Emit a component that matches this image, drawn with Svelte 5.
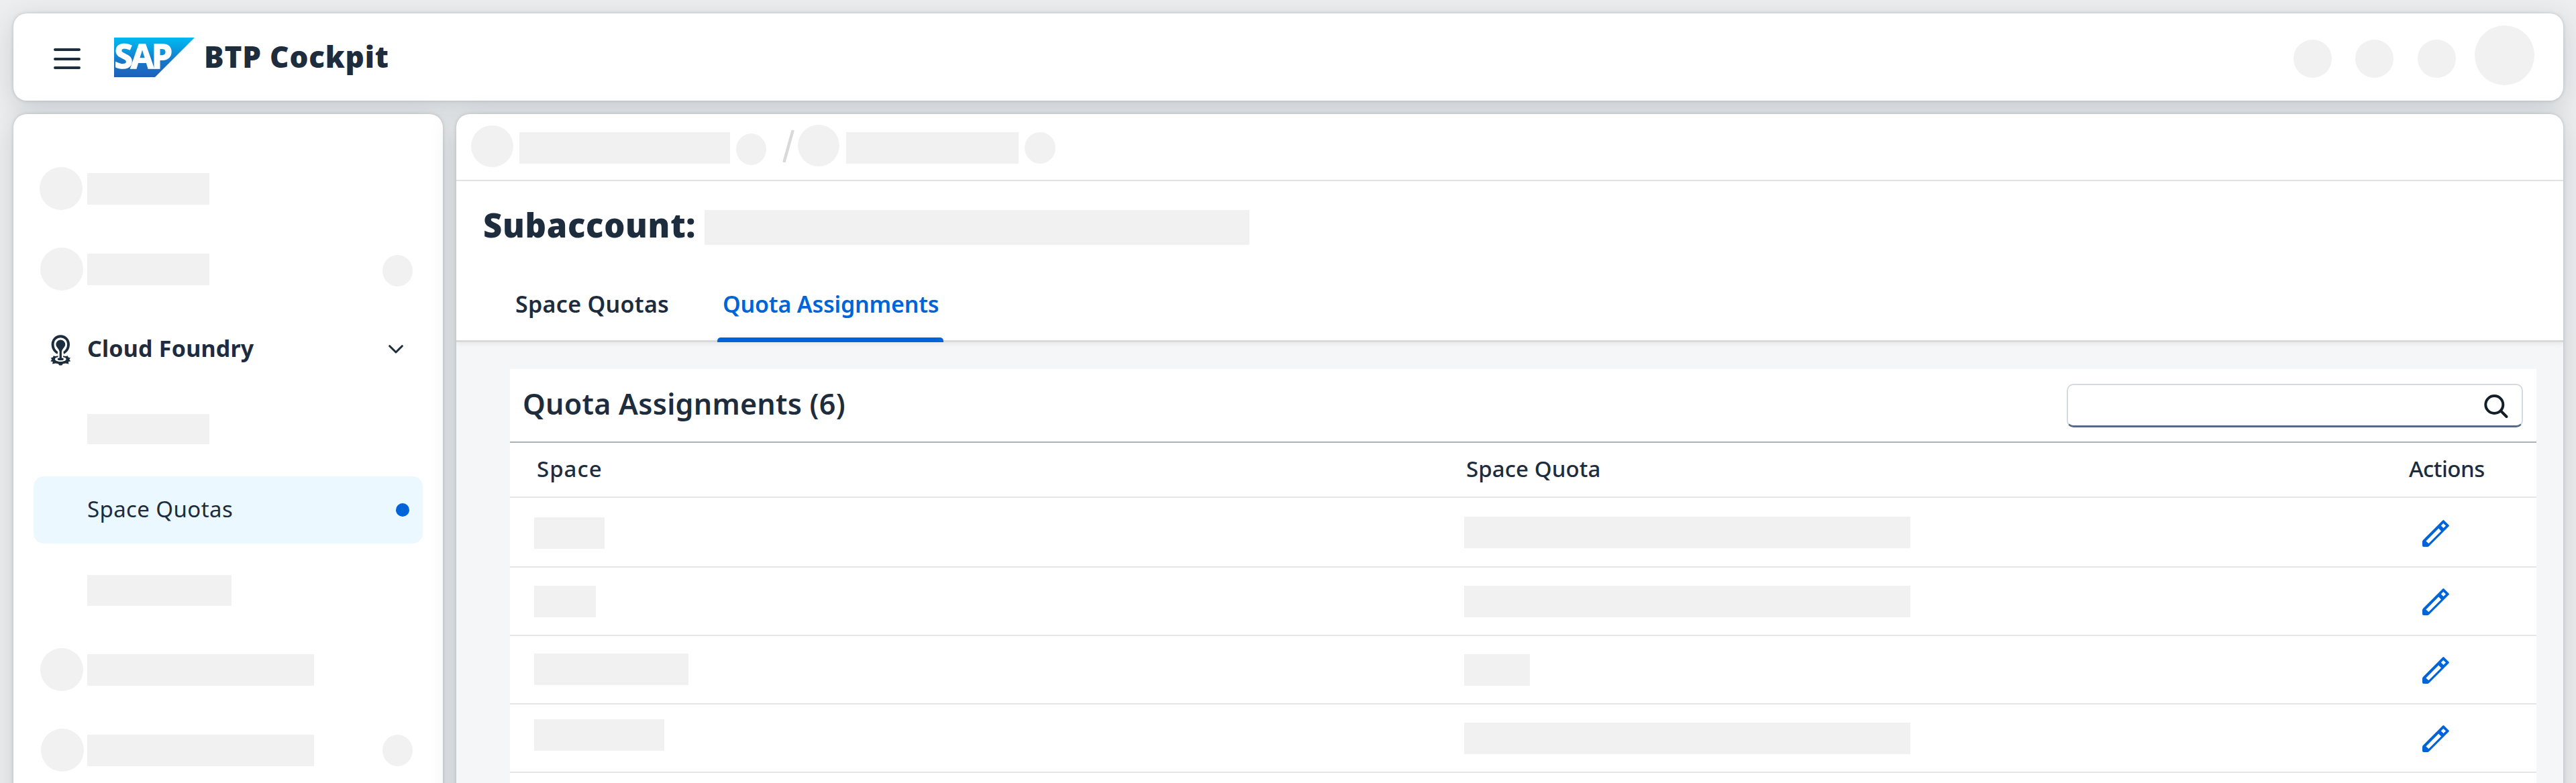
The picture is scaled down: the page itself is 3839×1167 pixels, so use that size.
<script>
  // Placeholder sidebar rows: dot / bar / badge sizes and their offset inside the row
  const nav = [
    { dot: { left: 9, top: 19 }, bar: { w: 182, h: 47, top: 28 } },
    { dot: { left: 10, top: 19 }, bar: { w: 182, h: 47, top: 28 }, badge: 30 },
    { kind: 'group', label: 'Cloud Foundry' },
    { bar: { w: 182, h: 45, top: 27 } },
    { kind: 'selected', label: 'Space Quotas' },
    { bar: { w: 215, h: 46, top: 27 } },
    { dot: { left: 10, top: 16 }, bar: { w: 338, h: 47, top: 25 } },
    { dot: { left: 11, top: 16 }, bar: { w: 338, h: 47, top: 25 }, badge: 25 }
  ];

  const rows = [
    { space: 105, spaceTop: 29, quota: 665, quotaTop: 28 },
    { space: 92, spaceTop: 27, quota: 665, quotaTop: 27 },
    { space: 230, spaceTop: 26, quota: 98, quotaTop: 27 },
    { space: 194, spaceTop: 22, quota: 665, quotaTop: 27 }
  ];
</script>

<div class="shell">
  <header class="topbar">
    <svg class="burger" viewBox="0 0 40 32" fill="none" stroke="#1d2d3e" stroke-width="4" stroke-linecap="round">
      <path d="M2 2H38M2 16H38M2 29H38" />
    </svg>
    <svg class="logo" viewBox="0 0 120 59">
      <defs>
        <linearGradient id="sap" x1="0" y1="0" x2="0" y2="1">
          <stop offset="0" stop-color="#00b8f1" />
          <stop offset=".22" stop-color="#06a5e5" />
          <stop offset=".55" stop-color="#157bcb" />
          <stop offset="1" stop-color="#1f5fbb" />
        </linearGradient>
      </defs>
      <path d="M0 0H120L61 59H0Z" fill="url(#sap)" />
      <text x=".6" y="46.3">SAP</text>
    </svg>
    <span class="product">BTP Cockpit</span>
    <div class="tools">
      <i class="ph round tool"></i>
      <i class="ph round tool"></i>
      <i class="ph round tool"></i>
      <i class="ph round avatar"></i>
    </div>
  </header>

  <div class="body">
    <nav class="side">
      {#each nav as item}
        <div class="item {item.kind ?? ''}">
          <div class="lead">
            {#if item.dot}
              <i class="ph round dot" style:margin-left="{item.dot.left}px" style:margin-top="{item.dot.top}px"></i>
            {:else if item.kind === 'group'}
              <svg class="cf" viewBox="15 8 31 47" fill="#1d2d3e">
                <path d="M25.6 37.8C20 35.2 16.6 30 16.6 23A13.7 13.7 0 0 1 44 23C44 30 40.6 35.2 35 37.8L34.4 34.2C38.2 31.8 40.1 27.9 40.1 23A9.8 9.8 0 0 0 20.5 23C20.5 27.9 22.4 31.8 26.2 34.2Z" />
                <path d="M30.3 16.6A6.9 6.9 0 0 1 37.2 23.5C37.2 27.5 32.4 29.5 31.9 34.5L32 44.5H28.6L28.7 34.5C28.2 29.5 23.4 27.5 23.4 23.5A6.9 6.9 0 0 1 30.3 16.6Z" />
                <path fill-rule="evenodd" d="M26.5 40.2L22.6 40.9L19.8 40.3L18.8 42.4L15.6 43.6L17.3 45.6L15.4 48.6L18.6 49L18.2 52.6L22.8 51.6L26.8 52.3L28.4 54.6H32.2L33.8 52.3L37.8 51.6L42.4 52.6L42 49L45.2 48.6L43.3 45.6L45 43.6L41.8 42.4L40.8 40.3L38 40.9L34.1 40.2V42.2C37 42.6 38.6 43.8 38.6 45.2C38.6 47.4 34.8 48.9 30.3 48.9S22 47.4 22 45.2C22 43.8 23.6 42.6 26.5 42.2Z" />
                <ellipse cx="30.3" cy="45.2" rx="4.6" ry="1.9" />
              </svg>
            {/if}
          </div>
          {#if item.label}
            <span class="label">{item.label}</span>
          {:else}
            <i class="ph" style:width="{item.bar.w}px" style:height="{item.bar.h}px" style:margin-top="{item.bar.top}px"></i>
          {/if}
          {#if item.badge}
            <i class="ph round badge" style:margin-top="{item.badge}px"></i>
          {:else if item.kind === 'group'}
            <svg class="chev" viewBox="0 0 22 13" fill="none" stroke="#1d2d3e" stroke-width="3" stroke-linecap="round" stroke-linejoin="round">
              <path d="M1.7 1.7L11 11L20.3 1.7" />
            </svg>
          {:else if item.kind === 'selected'}
            <i class="marker"></i>
          {/if}
        </div>
      {/each}
    </nav>

    <main class="main">
      <div class="crumbs">
        <i class="ph round c1"></i>
        <i class="ph b1"></i>
        <i class="ph round c2"></i>
        <svg class="slash" viewBox="0 0 18 48" stroke="#d9d9d9" stroke-width="4.4"><path d="M2.3 48L15.7 0" /></svg>
        <i class="ph round c3"></i>
        <i class="ph b2"></i>
        <i class="ph round c4"></i>
      </div>

      <section class="head">
        <div class="title">
          <h1>Subaccount:</h1>
          <i class="ph name"></i>
        </div>
        <div class="tabs">
          <span class="tab">Space Quotas</span>
          <span class="tab active">Quota Assignments</span>
        </div>
      </section>

      <section class="content">
        <div class="card">
          <div class="toolbar">
            <h2>Quota Assignments (6)</h2>
            <div class="search">
              <svg viewBox="0 0 38 38" fill="none" stroke="#131e29" stroke-width="4" stroke-linecap="round">
                <circle cx="16.3" cy="16" r="13" />
                <path d="M26 25.5L34.5 34" />
              </svg>
            </div>
          </div>
          <div class="row thead">
            <span class="th space">Space</span>
            <span class="th quota">Space Quota</span>
            <span class="th actions">Actions</span>
          </div>
          {#each rows as row}
            <div class="row">
              <i class="ph cell" style:width="{row.space}px" style:margin-top="{row.spaceTop}px"></i>
              <i class="ph cell" style:width="{row.quota}px" style:margin-top="{row.quotaTop}px"></i>
              <svg class="pencil" viewBox="0 0 40 40">
                <path fill="#0064d9" fill-rule="evenodd" d="M30.4 .6Q31.4 -.4 32.4 .6L39.4 7.6Q40.4 8.6 39.4 9.6L10.2 38.8Q9 40 7.4 40H2Q0 40 0 38V32.6Q0 31 1.2 29.8ZM24.2 12.6L5.4 31.4L9.4 34.9L28 16.4ZM31.2 5L27.8 8.4L31.5 12L35 8.6Z" />
              </svg>
            </div>
          {/each}
        </div>
      </section>
    </main>
  </div>
</div>

<style>
  :global(body) { margin: 0; overflow: hidden; }
  .shell {
    box-sizing: border-box;
    width: 3839px;
    height: 1167px;
    padding: 20px 19px 0 20px;
    overflow: hidden;
    display: flex;
    flex-direction: column;
    gap: 20px;
    background: #edeeef;
    color: #1d2d3e;
    font-family: "Noto Sans", "Open Sans", sans-serif;
  }
  .topbar, .side, .main {
    box-sizing: border-box;
    background: #fff;
    box-shadow: 0 0 5px rgba(34, 53, 72, .2), 0 10px 40px rgba(34, 53, 72, .18);
  }
  .ph { display: block; flex: none; background: #f1f1f1; }
  .round { border-radius: 50%; }

  .topbar {
    flex: none;
    height: 130px;
    border-radius: 20px;
    display: flex;
    align-items: center;
    padding: 0 43px 0 60px;
  }
  .burger { width: 40px; height: 32px; margin-top: 5px; }
  .logo { width: 120px; height: 59px; margin-left: 50px; overflow: visible; }
  .logo text {
    font: 700 50px "Open Sans", sans-serif;
    letter-spacing: -3.5px;
    fill: #fff;
    stroke: #fff;
    stroke-width: 1.4px;
  }
  .product {
    margin: -2px 0 0 14px;
    font-size: 44px;
    font-weight: 900;
    letter-spacing: .8px;
    line-height: 60px;
  }
  .tools { margin-left: auto; display: flex; align-items: center; }
  .tool { width: 57px; height: 57px; margin: 5px 35px 0 0; }
  .tool:nth-child(2) { margin-right: 36px; }
  .tool:nth-child(3) { margin-right: 28px; }
  .avatar { width: 89px; height: 89px; margin-top: -5px; }

  .body { flex: none; height: 1040px; display: flex; gap: 20px; }

  .side {
    width: 640px;
    flex: none;
    border-radius: 20px;
    padding: 60px 30px;
    display: flex;
    flex-direction: column;
    gap: 20px;
  }
  .item { height: 100px; flex: none; display: flex; align-items: flex-start; border-radius: 15px; }
  .lead { width: 80px; flex: none; }
  .dot { width: 64px; height: 64px; }
  .badge { width: 45px; height: 47px; margin-left: auto; margin-right: 15px; }
  .group, .selected { align-items: center; }
  .cf { display: block; width: 31px; height: 47px; margin: 2px 0 0 25px; }
  .label { margin-top: -2px; line-height: 50px; }
  .group .label { font-size: 34px; font-weight: 700; letter-spacing: .2px; }
  .selected { background: #ebf8ff; }
  .selected .label { font-size: 33px; letter-spacing: .4px; }
  .chev { width: 22px; height: 13px; margin: 1px 29px 0 auto; }
  .marker { width: 20px; height: 20px; border-radius: 50%; background: #0064d9; margin: 0 20px 0 auto; }

  .main {
    flex: 1;
    min-width: 0;
    border-radius: 20px;
    overflow: hidden;
    display: flex;
    flex-direction: column;
  }
  .crumbs {
    flex: none;
    box-sizing: border-box;
    height: 100px;
    border-bottom: 2px solid #e5e5e5;
    padding: 16px 22px 0;
    display: flex;
    align-items: flex-start;
  }
  .c1 { width: 63px; height: 62px; margin: 1px 9px 0 0; }
  .b1 { width: 314px; height: 47px; margin: 11px 9px 0 0; }
  .c2 { width: 45px; height: 47px; margin: 13px 24px 0 0; }
  .slash { width: 18px; height: 48px; margin: 8px 5px 0 0; flex: none; }
  .c3 { width: 62px; height: 62px; margin-right: 10px; }
  .b2 { width: 257px; height: 47px; margin: 11px 9px 0 0; }
  .c4 { width: 46px; height: 47px; margin-top: 11px; }

  .head {
    flex: none;
    box-sizing: border-box;
    position: relative;
    z-index: 1;
    height: 240px;
    padding-top: 43px;
    border-bottom: 3px solid #d9d9d9;
    background: #fff;
    box-shadow: 0 2px 8px rgba(0, 0, 0, .07);
    display: flex;
    flex-direction: column;
    justify-content: space-between;
  }
  .title { display: flex; align-items: flex-start; padding-left: 40px; }
  h1 {
    margin: 0;
    width: 330px;
    font-size: 49px;
    font-weight: 900;
    letter-spacing: .7px;
    line-height: 44px;
    white-space: nowrap;
  }
  .name { width: 812px; height: 52px; }
  .tabs { display: flex; padding-left: 80px; gap: 56px; }
  .tab {
    position: relative;
    width: 243px;
    padding: 0 0 0 8px;
    height: 107px;
    line-height: 106px;
    font-size: 34px;
    font-weight: 600;
    letter-spacing: .3px;
    white-space: nowrap;
  }
  .active { width: 329px; color: #0064d9; letter-spacing: -.2px; margin-left: 2px; }
  .active::after {
    content: "";
    position: absolute;
    left: 0;
    right: 0;
    bottom: -3px;
    height: 7px;
    border-radius: 5px 5px 0 0;
    background: #0064d9;
  }

  .content { flex: 1; background: #f5f6f8; padding: 40px 40px 0 80px; }
  .card { height: 100%; background: #fff; }
  .toolbar {
    box-sizing: border-box;
    height: 110px;
    border-bottom: 2px solid #a8b2bd;
    padding: 22px 20px 0 19px;
    display: flex;
    justify-content: space-between;
    align-items: flex-start;
  }
  h2 { margin: 0; font-size: 43px; font-weight: 600; letter-spacing: .25px; line-height: 60px; }
  .search {
    box-sizing: border-box;
    width: 680px;
    height: 65px;
    border: 2px solid #d5dae0;
    border-bottom: 3px solid #556b82;
    border-radius: 10px;
    display: flex;
    justify-content: flex-end;
    padding: 13px 19px 0;
  }
  .search svg { width: 38px; height: 38px; }
  .row {
    box-sizing: border-box;
    height: 102px;
    border-bottom: 2px solid #e5e5e5;
    padding-left: 36px;
    display: grid;
    grid-template-columns: 1386px 1408px 1fr;
    align-items: start;
  }
  .thead { height: 82px; }
  .thead + .row { height: 104px; }
  .th { font-size: 33px; font-weight: 500; line-height: 78px; }
  .space { padding-left: 4px; letter-spacing: 1px; }
  .quota { padding-left: 3px; letter-spacing: .1px; }
  .actions { letter-spacing: -.5px; }
  .cell { height: 47px; }
  .pencil { width: 40px; height: 40px; margin: 31px 0 0 20px; }
  .thead + .row .pencil { margin-top: 33px; }
</style>
